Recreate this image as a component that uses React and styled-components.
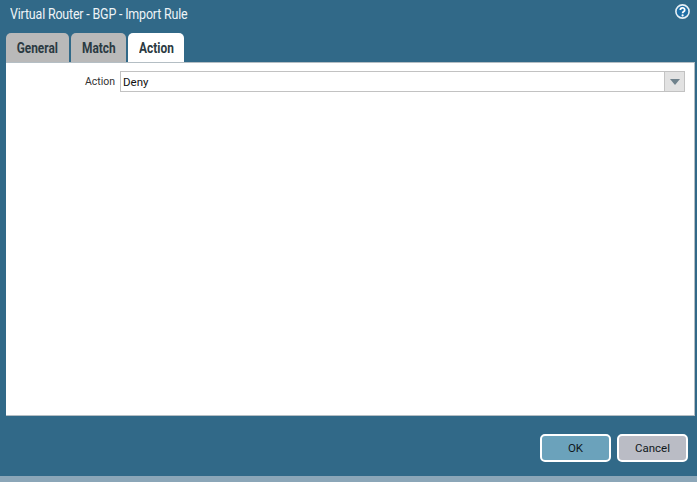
import React from 'react';
import styled, { createGlobalStyle } from 'styled-components';

const GlobalStyle = createGlobalStyle`
  html, body {
    margin: 0;
    padding: 0;
    background: #8ba6b8;
  }
`;

const Dialog = styled.div`
  width: 697px;
  height: 476px;
  background: #316988;
  font-family: "Roboto", "Liberation Sans", sans-serif;
  display: flex;
  flex-direction: column;
  overflow: hidden;
`;

const Header = styled.div`
  height: 33px;
  padding: 3px 7px 0 10px;
  box-sizing: border-box;
  display: flex;
  align-items: flex-start;
  justify-content: space-between;
`;

const Title = styled.div`
  font-size: 14px;
  line-height: 22px;
  color: #eef4f7;
  letter-spacing: -0.2px;
  transform: scaleX(0.89);
  transform-origin: left center;
`;

const HelpIcon = styled.svg`
  width: 15px;
  height: 15px;
  margin-top: 1px;
`;

const Tabs = styled.div`
  height: 29px;
  padding-left: 6px;
  display: flex;
  gap: 2px;
`;

const Tab = styled.div`
  width: ${(p) => p.$width}px;
  box-sizing: border-box;
  border-radius: 5px 5px 0 0;
  background: ${(p) => (p.$active ? '#ffffff' : '#b9b9b9')};
  color: #2b3a42;
  font-size: 14px;
  font-weight: 700;
  display: flex;
  align-items: center;
  justify-content: center;
`;

const TabLabel = styled.span`
  transform: scaleX(0.85);
`;

const Panel = styled.div`
  height: 354px;
  margin: 0 2px 0 6px;
  box-sizing: border-box;
  background: #ffffff;
  border: solid #b4bec4;
  border-width: 1px 1px 1px 0;
  padding: 8px 9px 0 0;
`;

const Field = styled.div`
  display: flex;
  align-items: center;
  gap: 5px;
`;

const Label = styled.div`
  width: 109px;
  text-align: right;
  font-size: 10.5px;
  color: #333333;
`;

const Select = styled.div`
  flex: 1;
  height: 21px;
  box-sizing: border-box;
  border: 1px solid #c2c2c2;
  display: flex;
  align-items: center;
  justify-content: space-between;
  font-size: 11.5px;
  color: #111111;
  padding-left: 2px;
`;

const Arrow = styled.div`
  width: 20px;
  height: 19px;
  box-sizing: border-box;
  background: #e2e2e2;
  border-left: 1px solid #c4c4c4;
  display: flex;
  align-items: center;
  justify-content: center;

  &::after {
    content: '';
    border-style: solid;
    border-width: 6px 5.5px 0 5.5px;
    border-color: #6f828c transparent transparent transparent;
  }
`;

const Footer = styled.div`
  flex: 1;
  display: flex;
  justify-content: flex-end;
  gap: 6px;
  padding: 18px 9px 0 0;
`;

const Button = styled.button`
  width: 71px;
  height: 28px;
  box-sizing: border-box;
  border: 2px solid #ffffff;
  border-radius: 5px;
  background: ${(p) => (p.$primary ? '#6ba2bb' : '#babcc5')};
  color: #10181c;
  font-family: inherit;
  font-size: 11.5px;
  padding: 0;
`;

export default function App() {
  return (
    <>
      <GlobalStyle />
      <Dialog>
        <Header>
          <Title>Virtual Router - BGP - Import Rule</Title>
          <HelpIcon viewBox="0 0 15 15">
            <circle cx="7.5" cy="7.5" r="6.6" fill="#1f6fa6" stroke="#e6eff4" strokeWidth="1.6" />
            <path d="M5.3 5.9a2.2 2.1 0 1 1 3.5 1.7c-.8.5-1.2.9-1.2 1.6" fill="none" stroke="#fff" strokeWidth="1.8" />
            <circle cx="7.6" cy="11.4" r="1.1" fill="#fff" />
          </HelpIcon>
        </Header>
        <Tabs>
          <Tab $width={63}><TabLabel>General</TabLabel></Tab>
          <Tab $width={55}><TabLabel>Match</TabLabel></Tab>
          <Tab $width={56} $active><TabLabel>Action</TabLabel></Tab>
        </Tabs>
        <Panel>
          <Field>
            <Label>Action</Label>
            <Select>
              Deny
              <Arrow />
            </Select>
          </Field>
        </Panel>
        <Footer>
          <Button $primary>OK</Button>
          <Button>Cancel</Button>
        </Footer>
      </Dialog>
    </>
  );
}
